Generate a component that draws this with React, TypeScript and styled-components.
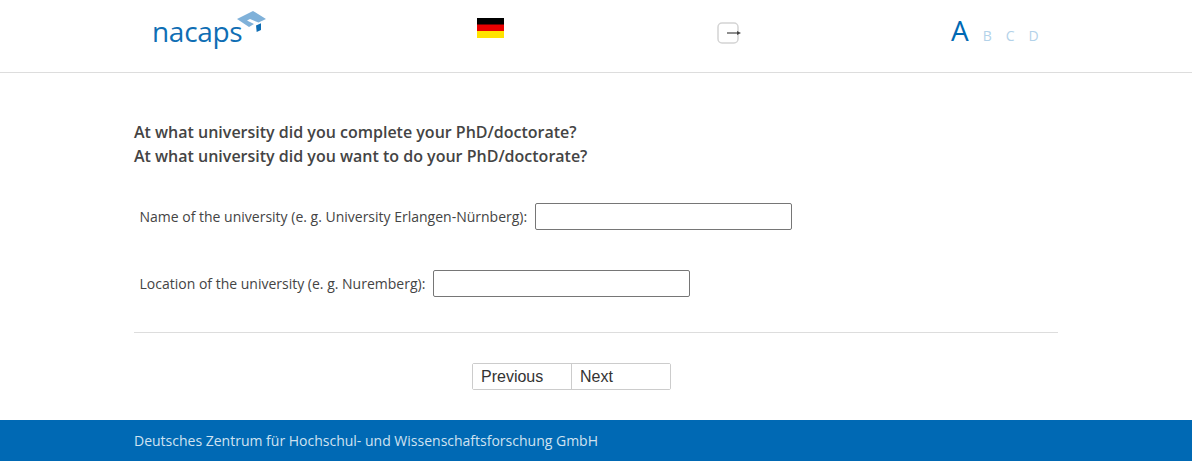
import React from 'react';
import styled, { createGlobalStyle } from 'styled-components';

const GlobalStyle = createGlobalStyle`
    html, body {
        margin: 0;
        padding: 0;
        background: #fff;
        font-family: 'Open Sans', sans-serif;
    }
`;

const Header = styled.header`
    display: grid;
    grid-template-columns: 477px 240px 234px 1fr;
    height: 72px;
    border-bottom: 1px solid #ddd;
`;

const LogoCell = styled.div`
    position: relative;
    padding: 12px 0 0 153px;
`;

const LogoText = styled.span`
    display: block;
    margin-left: -1px;
    font-family: 'Open Sans', sans-serif;
    font-size: 28px;
    font-weight: 500;
    line-height: 38px;
    letter-spacing: -0.3px;
    color: #0f6eb4;
`;

const LogoMark = styled.svg`
    position: absolute;
    left: 234px;
    top: 10px;
`;

const FlagCell = styled.div`
    padding-top: 18px;
`;

const Flag = styled.svg`
    display: block;
`;

const ExitCell = styled.div`
    padding-top: 22px;
`;

const SizeCell = styled.div`
    display: flex;
    align-items: baseline;
    gap: 14px;
    padding-top: 11px;
    height: 42px;
`;

const SizeLetter = styled.span<{ $active?: boolean }>`
    color: ${(props) => (props.$active ? '#0069b4' : '#b3d2e9')};
    font-size: ${(props) => (props.$active ? '28px' : '14px')};
    font-weight: ${(props) => (props.$active ? 530 : 400)};
    line-height: 38px;
`;

const Main = styled.main`
    padding: 47px 134px 0;
    height: 299px;
    box-sizing: border-box;
`;

const Question = styled.h1`
    margin: 0 0 35px;
    font-size: 16px;
    font-weight: 600;
    line-height: 24px;
    color: #444;
`;

const Field = styled.label`
    display: flex;
    align-items: center;
    height: 27px;
    margin: 0 0 40px 5.5px;
    font-size: 14px;
    color: #444;

    &:last-of-type {
        margin-bottom: 35px;
    }
`;

const FieldLabel = styled.span`
    margin-right: 8px;
`;

const TextInput = styled.input`
    width: 257px;
    height: 27px;
    box-sizing: border-box;
    border: 1px solid #767676;
    border-radius: 2px;
    background: #fff;
    padding: 0 4px;
`;

const Divider = styled.hr`
    width: 924px;
    margin: 0;
    border: 0;
    border-top: 1px solid #ddd;
`;

const Pager = styled.nav`
    display: flex;
    width: 199px;
    height: 27px;
    box-sizing: border-box;
    margin: 30px auto 0;
    border: 1px solid #ccc;
    border-radius: 2px;
    position: relative;
    left: -24.5px;
`;

const PagerButton = styled.button`
    flex: 1;
    padding: 0 0 0 8px;
    border: 0;
    background: #fff;
    text-align: left;
    font-family: 'Liberation Sans', sans-serif;
    font-size: 16px;
    color: #333;

    & + & {
        border-left: 1px solid #ccc;
    }
`;

const Footer = styled.footer`
    display: flex;
    align-items: center;
    height: 41px;
    margin-top: 48px;
    padding-left: 134px;
    background: #0069b4;
    color: #cfe2f1;
    font-size: 14px;
`;

const App = () => (
    <>
        <GlobalStyle />
        <Header>
            <LogoCell>
                <LogoText>nacaps</LogoText>
                <LogoMark width='32' height='28' viewBox='0 0 32 28'>
                    <path d='M3 9 L19 1 L32 9 L24.5 12.5 L16 9 L13 10.5 L20 14 L15 17 Z' fill='#7fb1d9' />
                    <path d='M22 15.5 L27 13.3 V20 L22.7 22 Z' fill='#0f6eb4' />
                </LogoMark>
            </LogoCell>
            <FlagCell>
                <Flag width='27' height='20' viewBox='0 0 27 20'>
                    <rect width='27' height='7' y='0' fill='#000' />
                    <rect width='27' height='7' y='6.5' fill='#e80000' />
                    <rect width='27' height='7' y='13' fill='#ffe300' />
                </Flag>
            </FlagCell>
            <ExitCell>
                <svg width='24' height='22' viewBox='0 0 24 22'>
                    <rect x='1' y='1' width='20' height='20' rx='4' fill='#fff' stroke='#d4d4d4' strokeWidth='1.5' />
                    <path d='M10 11 H21' stroke='#444' strokeWidth='1.2' />
                    <path d='M20 9 L24 11 L20 13 Z' fill='#444' />
                </svg>
            </ExitCell>
            <SizeCell>
                <SizeLetter $active>A</SizeLetter>
                <SizeLetter>B</SizeLetter>
                <SizeLetter>C</SizeLetter>
                <SizeLetter>D</SizeLetter>
            </SizeCell>
        </Header>
        <Main>
            <Question>
                At what university did you complete your PhD/doctorate?
                <br />
                At what university did you want to do your PhD/doctorate?
            </Question>
            <Field>
                <FieldLabel>Name of the university (e. g. University Erlangen-Nürnberg):</FieldLabel>
                <TextInput type='text' />
            </Field>
            <Field>
                <FieldLabel>Location of the university (e. g. Nuremberg):</FieldLabel>
                <TextInput type='text' />
            </Field>
            <Divider />
            <Pager>
                <PagerButton>Previous</PagerButton>
                <PagerButton>Next</PagerButton>
            </Pager>
        </Main>
        <Footer>Deutsches Zentrum für Hochschul- und Wissenschaftsforschung GmbH</Footer>
    </>
);

export default App;
